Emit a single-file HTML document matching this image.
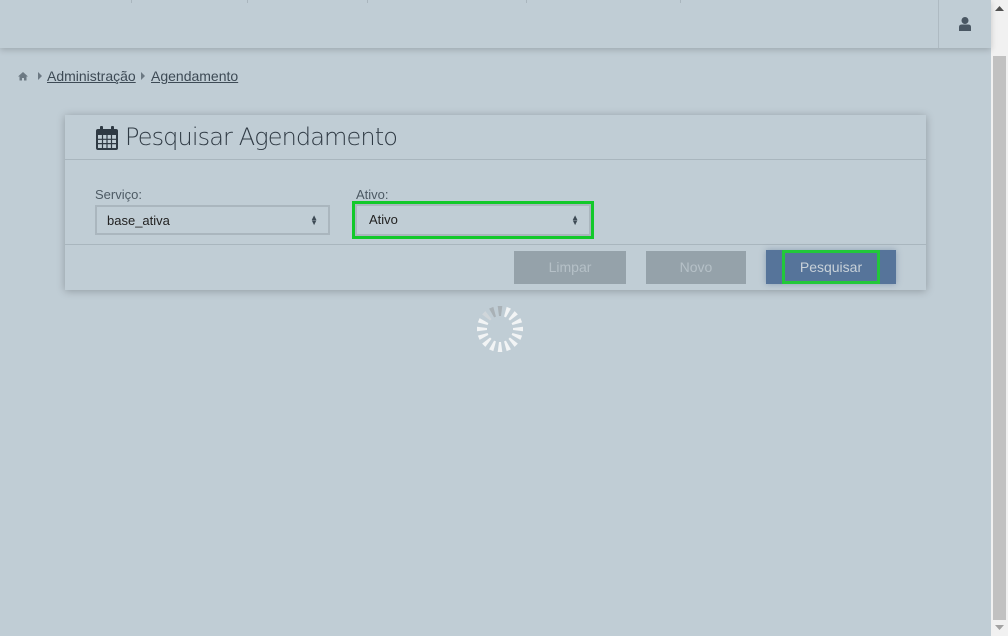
<!DOCTYPE html>
<html><head><meta charset="utf-8"><style>
*{box-sizing:border-box;margin:0;padding:0}
body{width:1008px;height:636px;background:#c0cdd5;font-family:"Liberation Sans","DejaVu Sans",sans-serif;position:relative;overflow:hidden}
.top{position:absolute;left:0;top:0;width:991px;height:48px;background:#c0cdd5;box-shadow:0 2px 6px rgba(0,0,0,.18);z-index:2}
.sep{position:absolute;top:0;width:1px;height:3px;background:#aab6be}
.usr{position:absolute;left:938px;top:0;width:1px;height:48px;background:#aebac2}
.sb{position:absolute;left:991px;top:0;width:17px;height:636px;background:#f1f1f1}
.thumb{position:absolute;left:993px;top:56px;width:13px;height:564px;background:#c1c1c1}
.bc{position:absolute;top:68px;font-size:14px;color:#3d4a55}
.bc a{color:#3d4a55;text-decoration:underline}
.panel{position:absolute;left:65px;top:115px;width:861px;height:175px;background:#c0cdd5;box-shadow:0 1px 8px rgba(0,0,0,.25)}
.h{height:45px;border-bottom:1px solid #a9b6be;position:relative}
.h span{position:absolute;left:60px;top:8px;font-size:24px;color:#2f3a44;font-family:"DejaVu Sans","Liberation Sans",sans-serif;font-weight:200;letter-spacing:-.9px}
.lbl{position:absolute;font-size:13px;color:#4d5a64}
.sel{position:absolute;border:2px solid #aab6be;font-size:13px;color:#222;padding:6px 10px}
.arr{position:absolute;right:10px;top:8px;font-size:8px;line-height:5px;color:#3d4a55}
.foot{position:absolute;left:0;top:129px;width:861px;height:1px;background:#a9b6be}
.btn{position:absolute;top:136px;height:33px;font-size:14px;color:#b5c0c7;text-align:center;line-height:33px}
</style></head><body>
<div class="top">
<div class="sep" style="left:131px"></div><div class="sep" style="left:247px"></div><div class="sep" style="left:367px"></div><div class="sep" style="left:526px"></div><div class="sep" style="left:680px"></div>
<div class="usr"></div>
<svg style="position:absolute;left:958px;top:16px" width="14" height="16" viewBox="0 0 14 16"><circle cx="7" cy="4.5" r="3.5" fill="#4a5763"/><path d="M1 15 V11 Q1 8.5 4 8.5 H10 Q13 8.5 13 11 V15Z" fill="#4a5763"/></svg>
</div>
<svg style="position:absolute;left:18px;top:71px" width="10" height="10" viewBox="0 0 10 10"><path d="M5 1 L0 5.5 H1.5 V9.5 H4 V7 H6 V9.5 H8.5 V5.5 H10Z" fill="#6c7983"/></svg>
<svg style="position:absolute;left:38px;top:72px" width="5" height="8"><path d="M0 0 L4 4 L0 8Z" fill="#6c7983"/></svg>
<div class="bc" style="left:47px"><a>Administração</a></div>
<svg style="position:absolute;left:141px;top:72px" width="5" height="8"><path d="M0 0 L4 4 L0 8Z" fill="#6c7983"/></svg>
<div class="bc" style="left:151px"><a>Agendamento</a></div>
<div class="panel">
<div class="h">
<svg style="position:absolute;left:30px;top:11px" width="24" height="25" viewBox="0 0 24 25"><rect x="1" y="3" width="22" height="21" rx="2" fill="#2f3a44"/><rect x="3" y="9" width="18" height="13" fill="#c0cdd5"/><path d="M7.5 9V22M12 9V22M16.5 9V22M3 13.3H21M3 17.6H21" stroke="#2f3a44" stroke-width="1.2"/><rect x="5" y="0" width="3" height="6" rx="1" fill="#2f3a44"/><rect x="16" y="0" width="3" height="6" rx="1" fill="#2f3a44"/></svg>
<span>Pesquisar Agendamento</span></div>
<div class="lbl" style="left:30px;top:72px">Serviço:</div>
<div class="sel" style="left:30px;top:90px;width:235px;height:30px">base_ativa<div class="arr">▲<br>▼</div></div>
<div class="lbl" style="left:291px;top:72px">Ativo:</div>
<div class="sel" style="left:287px;top:86px;width:242px;height:38px;border:3px solid #12c92a;padding:0"><div style="position:absolute;inset:0;border:2px solid #aab6be;padding:6px 12px">Ativo<div class="arr" style="top:9px">▲<br>▼</div></div></div>
<div class="foot"></div>
<div class="btn" style="left:449px;width:112px;background:#95a2aa">Limpar</div>
<div class="btn" style="left:581px;width:100px;background:#95a2aa">Novo</div>
<div class="btn" style="left:701px;top:135px;width:130px;height:34px;background:#56749a;box-shadow:0 0 6px rgba(60,90,130,.4)"><div style="position:absolute;left:16px;top:0;width:98px;height:34px;border:3px solid #22c83a;line-height:28px;color:#c8d1d8">Pesquisar</div></div>
</div>
<svg style="position:absolute;left:476px;top:305px" width="48" height="48" viewBox="-24 -24 48 48">
<g id="s"></g>
<script>
var g=document.getElementById('s');
for(var i=0;i<16;i++){var a=i*22.5;var c=(i==0||i==15)?'#a9b1b6':(i==14?'#d0d6da':'#f2f4f5');
var p=document.createElementNS('http://www.w3.org/2000/svg','path');p.setAttribute('d','M-1 -13 L1 -13 L2.3 -23 L-2.3 -23Z');p.setAttribute('fill',c);p.setAttribute('transform','rotate('+a+')');g.appendChild(p);}
</script>
</svg>
<div class="sb"></div><div class="thumb"></div>
<svg style="position:absolute;left:995px;top:6px" width="9" height="5"><path d="M0 5 L4.5 0 L9 5Z" fill="#505050"/></svg>
<svg style="position:absolute;left:995px;top:625px" width="9" height="5"><path d="M0 0 L4.5 5 L9 0Z" fill="#a3a3a3"/></svg>
</body></html>
